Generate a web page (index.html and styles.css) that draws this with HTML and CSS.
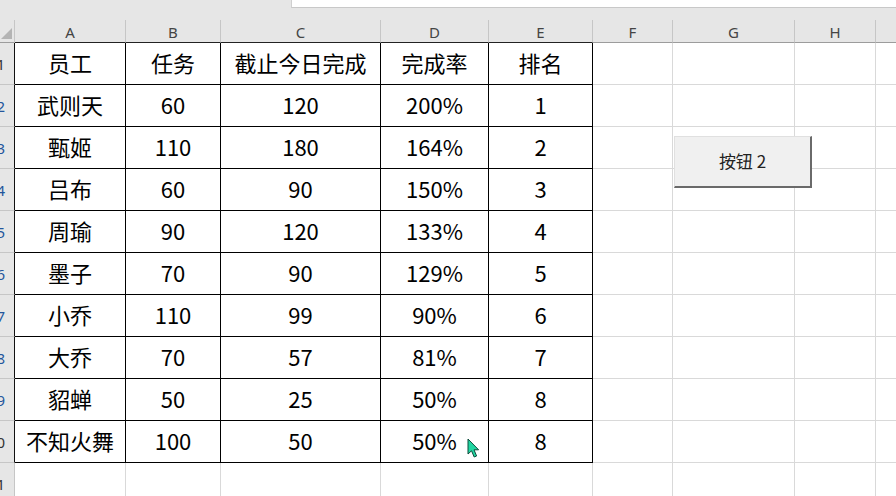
FILE: index.html
```html
<!DOCTYPE html>
<html lang="zh-CN">
<head>
  <meta charset="UTF-8" />
  <title>排名表</title>
  <link rel="stylesheet" href="styles.css">
</head>
<body>

  <div class="sheet">
    <div class="topbar">
      <div class="namebox"></div>
    </div>

    <div class="colheads">
      <div class="corner"></div>
      <div class="ch wa">A</div>
      <div class="ch wb">B</div>
      <div class="ch wc">C</div>
      <div class="ch wd">D</div>
      <div class="ch we">E</div>
      <div class="ch wf">F</div>
      <div class="ch wg">G</div>
      <div class="ch wh">H</div>
      <div class="ch wi"></div>
    </div>

    <div class="row">
      <div class="rh"><span>1</span></div>
      <div class="c t wa">员工</div>
      <div class="c t wb">任务</div>
      <div class="c t wc">截止今日完成</div>
      <div class="c t wd">完成率</div>
      <div class="c t we">排名</div>
      <div class="c wf"></div><div class="c wg"></div><div class="c wh"></div><div class="c wi"></div>
    </div>
    <div class="row">
      <div class="rh sel"><span>2</span></div>
      <div class="c t wa">武则天</div>
      <div class="c t wb">60</div>
      <div class="c t wc">120</div>
      <div class="c t wd">200%</div>
      <div class="c t we">1</div>
      <div class="c wf"></div><div class="c wg"></div><div class="c wh"></div><div class="c wi"></div>
    </div>
    <div class="row">
      <div class="rh sel"><span>3</span></div>
      <div class="c t wa">甄姬</div>
      <div class="c t wb">110</div>
      <div class="c t wc">180</div>
      <div class="c t wd">164%</div>
      <div class="c t we">2</div>
      <div class="c wf"></div><div class="c wg"></div><div class="c wh"></div><div class="c wi"></div>
    </div>
    <div class="row">
      <div class="rh sel"><span>4</span></div>
      <div class="c t wa">吕布</div>
      <div class="c t wb">60</div>
      <div class="c t wc">90</div>
      <div class="c t wd">150%</div>
      <div class="c t we">3</div>
      <div class="c wf"></div><div class="c wg"></div><div class="c wh"></div><div class="c wi"></div>
    </div>
    <div class="row">
      <div class="rh sel"><span>5</span></div>
      <div class="c t wa">周瑜</div>
      <div class="c t wb">90</div>
      <div class="c t wc">120</div>
      <div class="c t wd">133%</div>
      <div class="c t we">4</div>
      <div class="c wf"></div><div class="c wg"></div><div class="c wh"></div><div class="c wi"></div>
    </div>
    <div class="row">
      <div class="rh sel"><span>6</span></div>
      <div class="c t wa">墨子</div>
      <div class="c t wb">70</div>
      <div class="c t wc">90</div>
      <div class="c t wd">129%</div>
      <div class="c t we">5</div>
      <div class="c wf"></div><div class="c wg"></div><div class="c wh"></div><div class="c wi"></div>
    </div>
    <div class="row">
      <div class="rh sel"><span>7</span></div>
      <div class="c t wa">小乔</div>
      <div class="c t wb">110</div>
      <div class="c t wc">99</div>
      <div class="c t wd">90%</div>
      <div class="c t we">6</div>
      <div class="c wf"></div><div class="c wg"></div><div class="c wh"></div><div class="c wi"></div>
    </div>
    <div class="row">
      <div class="rh sel"><span>8</span></div>
      <div class="c t wa">大乔</div>
      <div class="c t wb">70</div>
      <div class="c t wc">57</div>
      <div class="c t wd">81%</div>
      <div class="c t we">7</div>
      <div class="c wf"></div><div class="c wg"></div><div class="c wh"></div><div class="c wi"></div>
    </div>
    <div class="row">
      <div class="rh sel"><span>9</span></div>
      <div class="c t wa">貂蝉</div>
      <div class="c t wb">50</div>
      <div class="c t wc">25</div>
      <div class="c t wd">50%</div>
      <div class="c t we">8</div>
      <div class="c wf"></div><div class="c wg"></div><div class="c wh"></div><div class="c wi"></div>
    </div>
    <div class="row">
      <div class="rh"><span>10</span></div>
      <div class="c t wa">不知火舞</div>
      <div class="c t wb">100</div>
      <div class="c t wc">50</div>
      <div class="c t wd">50%</div>
      <div class="c t we">8</div>
      <div class="c wf"></div><div class="c wg"></div><div class="c wh"></div><div class="c wi"></div>
    </div>
    <div class="row">
      <div class="rh last"><span>11</span></div>
      <div class="c wa"></div><div class="c wb"></div><div class="c wc"></div><div class="c wd"></div><div class="c we"></div>
      <div class="c wf"></div><div class="c wg"></div><div class="c wh"></div><div class="c wi"></div>
    </div>

    <!-- form button sitting over the grid -->
    <div class="formbtn">按钮 2</div>

    <svg class="cursor" width="16" height="22" viewBox="0 0 16 22">
      <path d="M1 1 L1 16 L4.5 12.8 L7.2 19 L9.6 18 L7 11.8 L11.6 11.8 Z" fill="#21d6a2" stroke="#0b4a3a" stroke-width="1" stroke-linejoin="round"/>
    </svg>
  </div>

</body>
</html>
```

FILE: styles.css
```css
body {
  margin: 0;
  background: white;
  overflow: hidden;
}

.sheet {
  position: relative;
  width: 896px;
  height: 496px;
  overflow: hidden;
  display: flex;
  flex-direction: column;
  font-family: "Noto Sans CJK SC", "Noto Sans", sans-serif;
}

.topbar {
  height: 20px;
  flex: none;
  background: #e6e6e6;
  display: flex;
}

.namebox {
  margin-left: 291px;
  flex: 1;
  height: 7px;
  background: white;
  border-left: 1px solid #d0d0d0;
  border-bottom: 1px solid #c8c8c8;
}

.colheads {
  height: 23px;
  flex: none;
  display: flex;
  background: #e6e6e6;
}

.corner {
  position: relative;
  width: 15px;
  flex: none;
  box-sizing: border-box;
  border-right: 1px solid #c6c6c6;
  border-bottom: 1px solid #9c9c9c;
}

.corner::after {
  content: "";
  position: absolute;
  right: 2px;
  bottom: 3px;
  border-left: 11px solid transparent;
  border-bottom: 11px solid #b4b4b4;
}

.ch {
  flex: none;
  box-sizing: border-box;
  border-right: 1px solid #c6c6c6;
  border-bottom: 1px solid #9c9c9c;
  display: flex;
  align-items: center;
  justify-content: center;
  padding-top: 2px;
  font-family: "Noto Sans", "Liberation Sans", sans-serif;
  font-size: 15px;
  color: #444;
}

.colheads .ch:nth-child(-n+6) {
  border-bottom-color: #222;
}

.row {
  height: 42px;
  flex: none;
  display: flex;
}

.row:last-of-type {
  flex: 1;
}

.rh {
  width: 15px;
  flex: none;
  box-sizing: border-box;
  background: #e6e6e6;
  border-right: 1px solid #111;
  border-bottom: 1px solid #c6c6c6;
  overflow: hidden;
  display: flex;
  justify-content: flex-end;
  align-items: center;
  padding-right: 9px;
  font-family: "Noto Sans", "Liberation Sans", sans-serif;
  font-size: 15px;
  color: #333;
  white-space: nowrap;
}

.rh.sel {
  color: #24569c;
}

.rh.last {
  border-right-color: #c6c6c6;
  border-bottom: none;
}

.c {
  flex: none;
  box-sizing: border-box;
  border-right: 1px solid #d9d9d9;
  border-bottom: 1px solid #d9d9d9;
  display: flex;
  align-items: center;
  justify-content: center;
  padding-bottom: 4px;
  font-size: 22px;
  color: #000;
  white-space: nowrap;
}

.c.t {
  border-right-color: #000;
  border-bottom-color: #000;
}

.wa { width: 111px; }
.wb { width: 95px; }
.wc { width: 160px; }
.wd { width: 108px; }
.we { width: 104px; }
.wf { width: 80px; }
.wg { width: 122px; }
.wh { width: 81px; }
.wi { width: 40px; }

.formbtn {
  position: absolute;
  left: 674px;
  top: 136px;
  width: 138px;
  height: 52px;
  box-sizing: border-box;
  background: #f0f0f0;
  border-top: 1px solid #e0e0e0;
  border-left: 1px solid #e0e0e0;
  border-right: 2px solid #6a6a6a;
  border-bottom: 2px solid #6a6a6a;
  display: flex;
  align-items: center;
  justify-content: center;
  padding-bottom: 2px;
  font-size: 17px;
  color: #222;
}

.cursor {
  position: absolute;
  left: 467px;
  top: 438px;
}
```
